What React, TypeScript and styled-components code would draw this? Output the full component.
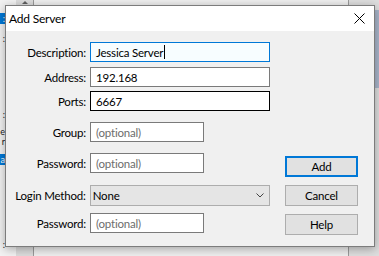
import React from 'react';
import styled, { createGlobalStyle } from 'styled-components';

const GlobalStyle = createGlobalStyle`
  html, body {
    margin: 0;
    padding: 0;
  }
  body {
    background: #e4e4e4;
    font-family: Lato, "Noto Sans", sans-serif;
  }
`;

const Desktop = styled.div`
  position: relative;
  width: 379px;
  height: 256px;
  overflow: hidden;
  display: flex;
  background: #e6e6e6;
`;

/* ---- window behind the dialog ---- */

const LeftPane = styled.div`
  width: 33px;
  display: flex;
  border-right: 1px solid #9a9a9a;
`;

const ListArea = styled.div`
  width: 16px;
  background: #f2f2f2;
  display: flex;
  flex-direction: column;
  font-size: 9px;
`;

const ListItem = styled.div<{ $top: number; $selected?: boolean }>`
  margin-top: ${({ $top }) => $top}px;
  width: 100%;
  height: ${({ $selected }) => ($selected ? 11 : 9)}px;
  line-height: ${({ $selected }) => ($selected ? 11 : 9)}px;
  overflow: hidden;
  text-align: right;
  padding-right: 11px;
  box-sizing: border-box;
  background: ${({ $selected }) => ($selected ? '#0078d7' : 'transparent')};
  color: ${({ $selected }) => ($selected ? '#fff' : '#1a1a1a')};
`;

const ScrollTrack = styled.div`
  flex: 1;
  background: #dcdcdc;
  display: flex;
  justify-content: center;
  padding-top: 1px;
`;

const ArrowUp = styled.div`
  width: 0;
  height: 0;
  border-left: 3px solid transparent;
  border-right: 3px solid transparent;
  border-bottom: 3px solid #606060;
`;

const CenterPane = styled.div`
  width: 314px;
  background: #efefef;
  border-right: 1px solid #9a9a9a;
`;

const RightPane = styled.div`
  flex: 1;
  display: flex;
  flex-direction: column;
  background: #dedede;
`;

const RightHeader = styled.div`
  margin-top: 10px;
  height: 78px;
  background: #a9b6cb;
`;

/* ---- dialog ---- */

const Dialog = styled.div`
  position: absolute;
  left: 5px;
  top: 5px;
  width: 370px;
  height: 242px;
  box-sizing: border-box;
  border: 1px solid #7c7c7c;
  background: #f0f0f0;
  box-shadow: 0 2px 9px rgba(0, 0, 0, 0.32);
  display: flex;
  flex-direction: column;
  font-size: 11.5px;
  letter-spacing: -0.2px;
  color: #000;
`;

const TitleBar = styled.div`
  height: 25px;
  background: #ffffff;
  display: flex;
  align-items: center;
  justify-content: space-between;
  padding: 0 9px 0 3px;
`;

const Title = styled.span`
  font-size: 12px;
`;

const CloseIcon = styled.svg`
  width: 11px;
  height: 11px;
  display: block;
`;

const Body = styled.div`
  flex: 1;
  display: flex;
  padding-top: 11px;
`;

const Form = styled.div`
  width: 264px;
  display: flex;
  flex-direction: column;
`;

const Row = styled.div<{ $gap: number }>`
  display: flex;
  align-items: center;
  gap: 4px;
  margin-top: ${({ $gap }) => $gap}px;
`;

const Label = styled.div`
  width: 80px;
  text-align: right;
  white-space: nowrap;
`;

type BoxState = 'focus' | 'hover' | 'normal';

const borderFor = (s: BoxState) =>
  s === 'focus' ? '#0078d7' : s === 'hover' ? '#000000' : '#7a7a7a';

const TextBox = styled.div<{ $width: number; $state?: BoxState }>`
  width: ${({ $width }) => $width}px;
  height: 20px;
  box-sizing: border-box;
  border: 1px solid ${({ $state = 'normal' }) => borderFor($state)};
  background: ${({ $state }) => ($state === 'focus' ? '#f7fdff' : '#ffffff')};
  display: flex;
  align-items: center;
  padding-left: 5px;
  white-space: nowrap;
`;

const Placeholder = styled.span`
  color: #6d6d6d;
`;

const Caret = styled.span`
  display: inline-block;
  width: 1px;
  height: 14px;
  margin-left: 1px;
  background: #000;
`;

const Select = styled.div`
  width: 181px;
  height: 21px;
  box-sizing: border-box;
  border: 1px solid #adadad;
  background: #e5e5e5;
  display: flex;
  align-items: center;
  justify-content: space-between;
  padding: 0 5px 0 2px;
`;

const Chevron = styled.svg`
  width: 8px;
  height: 5px;
  display: block;
`;

const Buttons = styled.div`
  margin-left: 15px;
  padding-top: 114px;
  display: flex;
  flex-direction: column;
  gap: 8px;
`;

const Button = styled.div<{ $default?: boolean }>`
  width: 73px;
  height: 21px;
  box-sizing: border-box;
  border: ${({ $default }) => ($default ? '2px solid #0078d7' : '1px solid #adadad')};
  background: #e1e1e1;
  display: flex;
  align-items: center;
  justify-content: center;
`;

export default function App() {
  return (
    <>
      <GlobalStyle />
      <Desktop>
        <LeftPane>
          <ListArea>
            <ListItem $top={13} $selected>:</ListItem>
            <ListItem $top={10}>:</ListItem>
            <ListItem $top={67}>:</ListItem>
            <ListItem $top={8}>e</ListItem>
            <ListItem $top={1}>r</ListItem>
            <ListItem $top={8} $selected>a</ListItem>
            <ListItem $top={75}>:</ListItem>
          </ListArea>
          <ScrollTrack>
            <ArrowUp />
          </ScrollTrack>
        </LeftPane>
        <CenterPane />
        <RightPane>
          <RightHeader />
        </RightPane>

        <Dialog>
          <TitleBar>
            <Title>Add Server</Title>
            <CloseIcon viewBox="0 0 11 11">
              <path d="M0.5 0.5 L10.5 10.5 M10.5 0.5 L0.5 10.5" stroke="#000" strokeWidth="1" fill="none" />
            </CloseIcon>
          </TitleBar>
          <Body>
            <Form>
              <Row $gap={0}>
                <Label>Description:</Label>
                <TextBox $width={180} $state="focus">
                  Jessica Server
                  <Caret />
                </TextBox>
              </Row>
              <Row $gap={5}>
                <Label>Address:</Label>
                <TextBox $width={180}>192.168</TextBox>
              </Row>
              <Row $gap={4}>
                <Label>Ports:</Label>
                <TextBox $width={180} $state="hover">6667</TextBox>
              </Row>
              <Row $gap={11}>
                <Label>Group:</Label>
                <TextBox $width={114}>
                  <Placeholder>(optional)</Placeholder>
                </TextBox>
              </Row>
              <Row $gap={11}>
                <Label>Password:</Label>
                <TextBox $width={114}>
                  <Placeholder>(optional)</Placeholder>
                </TextBox>
              </Row>
              <Row $gap={12}>
                <Label>Login Method:</Label>
                <Select>
                  <span>None</span>
                  <Chevron viewBox="0 0 8 5">
                    <path d="M0.5 0.5 L4 4 L7.5 0.5" stroke="#444" strokeWidth="1" fill="none" />
                  </Chevron>
                </Select>
              </Row>
              <Row $gap={7}>
                <Label>Password:</Label>
                <TextBox $width={114}>
                  <Placeholder>(optional)</Placeholder>
                </TextBox>
              </Row>
            </Form>
            <Buttons>
              <Button $default>Add</Button>
              <Button>Cancel</Button>
              <Button>Help</Button>
            </Buttons>
          </Body>
        </Dialog>
      </Desktop>
    </>
  );
}
